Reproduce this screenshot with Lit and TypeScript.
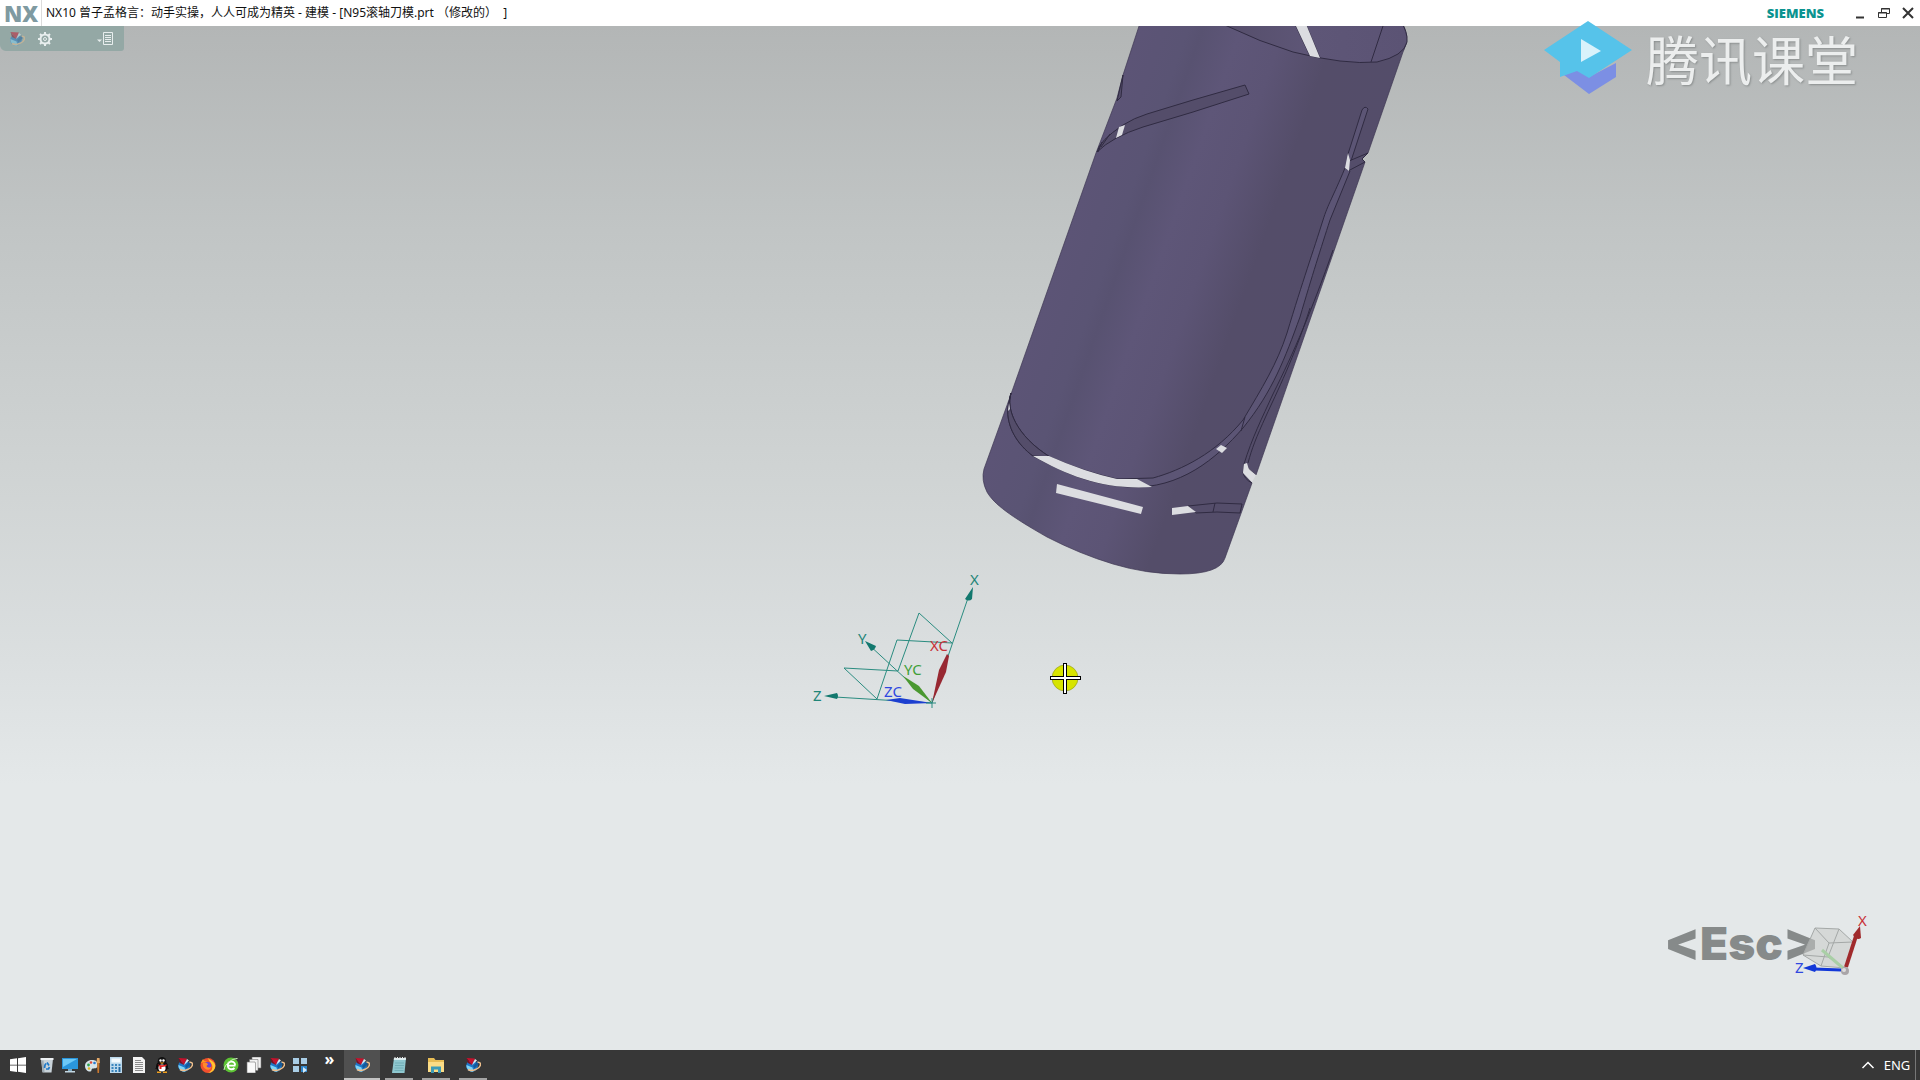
import { LitElement, html, svg, css } from "lit";
import { customElement } from "lit/decorators.js";

const nx = svg`
  <circle cx="7" cy="9" r="5.800" fill="#1e78c8"/>
  <path d="M1.500 8a5.800 5.800 0 0 0 7 6.500l-1-4z" fill="#7dd3f7"/>
  <path d="M8 9l5-5 .5 3.500-4 4z" fill="#155a9c"/>
  <path d="M1.500 1l8.500.5-3 6.500z" fill="#c4122c"/>
  <path d="M1.500 1l5.500 7-4-2z" fill="#7d0f22"/>
  <path d="M7 8l3-6 2 1.500z" fill="#dcebf5"/>
  <path d="M3 12.500c4 2.500 12-1 12.500-5 .1-2-1.500-2.500-3-2.300" fill="none" stroke="#eebf8c" stroke-width="1.500"/>`;

const art = {
  start: svg`<path d="M0 2.300l7-1v6.400H0zM8 1.200l8-1.200v7.700H8zM0 8.600h7V15l-7-1zM8 8.600h8V16l-8-1.200z" fill="#fff"/>`,
  bin: svg`<path d="M2 2h12l-1.500 13.500h-9z" fill="#c9d3d9"/><path d="M1.500 1h13v2h-13z" fill="#eef2f4"/><path d="M2.500 3.500h2l1 11.500h-2z" fill="#9dabb4"/><path d="M8 5.500l2 3M10.500 10l-1 2H7M5.500 11l.5-3 1-1.500" fill="none" stroke="#1c78c8" stroke-width="1.700"/>`,
  monitor: svg`<path d="M0 1h16v11H0z" fill="#2a96dc"/><path d="M1 2h14L1 10z" fill="#6cc8f6"/><path d="M6 12h4v2H6z" fill="#7ba7c0"/><path d="M3 14h10v1.500H3z" fill="#c2d7e2"/>`,
  paint: svg`<path d="M7 3c-4 0-7 2.500-7 6s3 6 5.500 5.500c1.500-.5.5-2.500 2-3s5 1 5-3.500S10 3 7 3z" fill="#d7e4ea"/><circle cx="3.500" cy="8" r="1.400" fill="#2ea44f"/><circle cx="6" cy="5.500" r="1.300" fill="#e04a3a"/><circle cx="9.500" cy="6" r="1.300" fill="#2a7ad0"/><circle cx="4" cy="11.500" r="1.300" fill="#e6b422"/><path d="M12 6h2.500L14 16h-1.500z" fill="#c87830"/><path d="M11.500 6L12 1h2.500l.5 5z" fill="#e3a868"/>`,
  calc: svg`<path d="M2 0h12v16H2z" fill="#bcd9ec"/><path d="M3.500 1.500h9v4h-9z" fill="#f4fafd"/><path d="M3.500 7h2v2h-2zM7 7h2v2H7zM3.500 10h2v2h-2zM7 10h2v2H7zM3.500 13h2v2h-2zM7 13h2v2H7zM10.500 7h2v2h-2z" fill="#3b86bd"/><path d="M10.500 10h2v5h-2z" fill="#2468a0"/>`,
  doc: svg`<path d="M2 0h9l3 3v13H2z" fill="#f3f3f3"/><path d="M4 3.500h6M4 5.500h8M4 7.500h8M4 9.500h8M4 11.500h8M4 13.500h8" stroke="#8b8b8b"/>`,
  qq: svg`<ellipse cx="8" cy="9.500" rx="6" ry="5.500" fill="#0c0c0c"/><ellipse cx="8" cy="4.500" rx="4.300" ry="4.500" fill="#111"/><path d="M1 12l3-4 1 3zM15 12l-3-4-1 3z" fill="#0c0c0c"/><ellipse cx="8" cy="11" rx="3.600" ry="3.500" fill="#fff"/><circle cx="6.500" cy="3.500" r="1.200" fill="#fff"/><circle cx="9.500" cy="3.500" r="1.200" fill="#fff"/><path d="M5.500 5.500h5L8 7z" fill="#f5a623"/><path d="M3.500 7.200c3 1.500 6 1.500 9 0v1.600c-2 1-3.500 1.200-5 1.100v2H5.500V9.500z" fill="#e02020"/><path d="M3 14.500h4V16H3zM9 14.500h4V16H9z" fill="#f0a020"/>`,
  nx,
  firefox: svg`<circle cx="8" cy="8.500" r="7.500" fill="#f2502e"/><path d="M8.500 1C9 3 15 4 15.300 9c-.3 4-3.300 7-7.300 7 4-2 5-5 4-8S8 4 8.500 1z" fill="#ffc630"/><path d="M.8 6L3 2l1.500 2 3 .5z" fill="#ff9a20"/><circle cx="7.800" cy="8.300" r="3.400" fill="#6d45d2"/><path d="M3 6c2-1 4 0 5 1.200L6.500 9c1 2 4 2 5 .5-.5 3-3.500 4-6 2.500S2.500 8 3 6z" fill="#ff8a2a"/>`,
  green: svg`<circle cx="8" cy="8" r="7.500" fill="#5cc234"/><path d="M12.500 8.700H4.800c.2 3.800 4.500 4.500 6.700 2.300M4.800 8.300c.2-5 7.100-5 7.300 0" fill="none" stroke="#fff" stroke-width="1.800"/><path d="M1 13C1.500 7 9 1.500 14.500 1.500" fill="none" stroke="#d4f5c4"/>`,
  pages: svg`<path d="M6 0h9v11H6z" fill="#f2f2f2" stroke="#777" stroke-width=".6"/><path d="M3.500 2.500h8.500v11H3.500z" fill="#f2f2f2" stroke="#777" stroke-width=".6"/><path d="M1 5h8l.5 1v10H1z" fill="#fafafa" stroke="#777" stroke-width=".6"/>`,
  grid: svg`<path d="M1 1h6v6H1zM9 1h6v6H9zM1 9h6v6H1z" fill="#a9cde6"/><path d="M9 9h6v6H9z" fill="#2f86cc"/><path d="M11 10l4 3-4 3z" fill="#d4eafa"/>`,
  notepad: svg`<path d="M3 1h12l-1.500 15H1z" fill="#8fc7cf"/><path d="M3 1h12l-.2 2H2.800z" fill="#dceff1"/><path d="M4 6h9M4 8.500h9M3.500 11h9M3.500 13.500h9" stroke="#6aa9b3" stroke-width=".8"/><path d="M4 0v2M6.500 0v2M9 0v2M11.500 0v2M14 0v2" stroke="#e9e9e9"/>`,
  folder: svg`<path d="M0 1h6l1.500 2H16v12H0z" fill="#e8bd55"/><path d="M0 5h16v10H0z" fill="#fbdc86"/><path d="M3 9.500h10V16h-3v-3.500H6V16H3z" fill="#3c9bb8"/>`,
};

type IconName = keyof typeof art;
const icon = (name: IconName) =>
  html`<svg class="icon" viewBox="0 0 16 16" aria-hidden="true">${art[name]}</svg>`;

const pinned: [IconName, string][] = [
  ["bin", "回收站"], ["monitor", "此电脑"], ["paint", "画图"], ["calc", "计算器"],
  ["doc", "文档"], ["qq", "QQ"], ["nx", "NX"], ["firefox", "Firefox"],
  ["green", "浏览器"], ["pages", "文件"], ["nx", "NX 10"], ["grid", "应用"],
];
const running: [IconName, string][] = [
  ["notepad", "记事本"], ["folder", "文件资源管理器"], ["nx", "NX"],
];

@customElement("title-bar")
export class TitleBar extends LitElement {
  static styles = css`
    :host { display: flex; align-items: center; height: 26px; background: #fff; color: #111;
      font: 12px/26px "Noto Sans", "Noto Sans CJK SC", sans-serif; }
    .logo { width: 41px; padding-left: 4px; box-sizing: border-box; color: #7f9aa1;
      font: 800 22px/26px "Open Sans", sans-serif; }
    .title { flex: 1; margin: 0; padding-left: 4px; border-left: 1px solid #dcdcdc;
      font-size: 12px; font-weight: 400; white-space: pre; }
    .brand { margin-right: 24px; color: #0b9490; font: 800 13px/26px "Open Sans", sans-serif; }
    button { display: grid; place-items: center; width: 24px; height: 26px; padding: 0; border: 0; background: none; }
    svg { width: 14px; height: 14px; fill: none; stroke: #333; }
  `;
  render() {
    return html`
      <span class="logo">NX</span>
      <h1 class="title">NX10 曾子孟格言：动手实操，人人可成为精英 - 建模 - [N95滚轴刀模.prt （修改的）  ]</h1>
      <span class="brand">SIEMENS</span>
      <button aria-label="最小化"><svg viewBox="0 0 14 14"><path d="M3 11.500h8" stroke-width="2"/></svg></button>
      <button aria-label="还原"><svg viewBox="0 0 14 14"><path d="M4.500 6V2.500h8v5H10M4 3h9M1.500 6.500h8v5h-8zM1 7h9"/></svg></button>
      <button aria-label="关闭"><svg viewBox="0 0 14 14"><path d="M2 2l10 10M12 2L2 12" stroke-width="2"/></svg></button>`;
  }
}

@customElement("model-view")
export class ModelView extends LitElement {
  static styles = css`
    :host { display: block; position: relative; overflow: hidden;
      background: linear-gradient(#b3b6b6, #c1c5c5 20%, #cfd3d3 43%, #dbdfe0 62%, #e4e8e9 74%, #e4e8e9); }
    .scene { position: absolute; inset: 0; width: 100%; height: 100%; }
    .tools { position: relative; display: flex; align-items: center; width: 124px; height: 25px;
      box-sizing: border-box; padding: 0 11px 0 9px; gap: 12px; background: #94a8a5; border-radius: 0 0 3px 6px; }
    .tools button { display: grid; padding: 0; border: 0; background: none; }
    .tools button:last-child { margin-left: auto; }
    .tools svg { width: 16px; height: 16px; }
    .faded { opacity: .5; }
    .edge { fill: none; stroke: #302b42; stroke-width: 1; }
    .groove { fill: #544d6a; stroke: #302b42; stroke-width: 1; }
    .ridge { fill: #5c5575; stroke: #302b42; stroke-width: 1; }
    .hole { fill: #dcdde1; }
    .datum { fill: none; stroke: #2a8c80; stroke-width: 1; }
    .tip { fill: #12786e; }
    .label { font: 15px "Noto Sans", sans-serif; }
    .teal { fill: #1f8578; }
    .red { fill: #c83038; }
    .green { fill: #3f9f38; }
    .blue { fill: #3048e0; }
    .key { fill: #868a8a; font: 900 46px Inter, "Liberation Sans", sans-serif; }
    .key.wide { font-size: 52px; }
  `;
  render() {
    return html`
      <svg class="scene" viewBox="0 26 1920 1024" preserveAspectRatio="xMidYMid slice" role="img" aria-label="N95滚轴刀模">
        <defs>
          <linearGradient id="skin" gradientUnits="userSpaceOnUse" x1="1040" y1="310" x2="1300" y2="401">
            <stop offset="0" stop-color="#5c5476"/><stop offset=".17" stop-color="#5a5474"/>
            <stop offset=".22" stop-color="#585271"/><stop offset=".35" stop-color="#5e5678"/>
            <stop offset=".5" stop-color="#5c5475"/><stop offset=".68" stop-color="#544d69"/>
            <stop offset="1" stop-color="#544d6a"/>
          </linearGradient>
          <linearGradient id="bore" x1="0" x2="1"><stop offset="0" stop-color="#544d69"/><stop offset=".5" stop-color="#5e5677"/><stop offset="1" stop-color="#5b5374"/></linearGradient>
        </defs>

        <path fill="url(#skin)" stroke="#3d3752" stroke-width=".7" d="M1141 20L1123 75 1117 98 1096 153 1010 397 984 469Q981 480 987 492C994 504 1010 516 1047 537Q1080 554 1113 564T1180 574Q1220 574 1225 558L1252 483 1243 473 1244 464 1256 475 1365 162 1362 159 1368 153 1403 52Q1412 36 1400 20z"/>
        <path fill="url(#bore)" stroke="#302b42" d="M1214 20L1227 26Q1260 42 1293 52 1345 65 1377 62 1404 56 1407 42 1408 32 1400 20z"/>
        <path class="edge" d="M1385 20L1371 62M1294 22L1310 56M1305 22L1320 58"/>
        <path class="hole" d="M1295 24H1306L1320 58 1310 56z"/>
        <path class="groove" d="M1123 75L1117 101 1121 97z"/>
        <path class="groove" d="M1245 85L1249 94 1193 112 1143 127Q1112 137 1097 152 1099 141 1123 125 1134 118 1147 114L1193 100z"/>
        <path class="edge" d="M1102 142L1098 152M1110 134L1101 147"/>
        <path class="hole" d="M1119 127L1125 125 1122 135 1116 138z"/>

        <path class="ridge" d="M1348 154L1362 110Q1365 105 1368 109L1350 164z"/>
        <path class="groove" d="M1349 161L1368 153 1362 159 1365 162 1348 171z"/>
        <path class="ridge" d="M1345 168C1333 197 1328 204 1323 220 1313 252 1303 280 1287 333 1277 364 1262 388 1243 420 1216 453 1182 470 1153 478L1117 479Q1085 472 1050 457C1015 435 1006 408 1011 393L1008 407C1006 427 1018 445 1033 456 1063 472 1090 485 1130 487 1180 489 1216 459 1243 428 1273 391 1285 358 1300 317 1312 276 1321 248 1330 220L1350 171z"/>
        <path class="groove" d="M1050 457C1015 435 1006 408 1011 393L1008 407C1006 427 1018 445 1033 456z"/>
        <path class="edge" d="M1245 417L1241 431"/>
        <path class="hole" d="M1348 153L1350 160 1349 171 1345 168z"/>
        <path class="hole" d="M1033 456L1049 456Q1085 472 1117 479L1137 479 1152 487C1105 490 1070 477 1033 456z"/>
        <path class="hole" d="M1009 403l1 6-2 2z"/>
        <path class="hole" d="M1221 445L1227 448 1222 453 1216 449z"/>
        <path class="hole" d="M1057 484L1143 507 1141 514 1056 493z"/>
        <path class="groove" d="M1188 506L1217 503 1242 504 1240 513 1217 512 1196 513z"/>
        <path class="edge" d="M1215 503L1213 512"/>
        <path class="hole" d="M1172 508L1188 506 1196 512 1172 515z"/>
        <path class="edge" d="M1333 250C1312 310 1294 352 1273 394 1262 418 1252 438 1244 464M1310 308C1295 356 1276 394 1266 416 1256 438 1252 448 1248 463"/>
        <path class="edge" d="M1243 472Q1244 479 1252 483"/>
        <path class="hole" d="M1244 464L1247 463 1249 470 1256 475 1252 482 1243 473z"/>

        <path class="datum" d="M932 703L968 598M932 703L868 644M932 703L835 697M898 671L919 613 952 643 897 640 877 699 844 668 898 671"/>
        <path class="tip" d="M973 587L972 599Q969 602 965 599zM865 641L876 646Q875 650 871 651zM824 696L837 693Q839 696 837 699z"/>
        <path fill="#982832" d="M932 703L939 670 947 654 949 656 946 672z"/>
        <path fill="#4a9830" d="M932 703L913 689 903 676 908 679 919 686z"/>
        <path fill="#1c3fd0" d="M932 703L905 704 886 700 900 698z"/>
        <path class="datum" d="M926 703h10M932 698v10"/>
        <text class="label teal" x="970" y="585">X</text>
        <text class="label teal" x="858" y="644">Y</text>
        <text class="label teal" x="813" y="701">Z</text>
        <text class="label red" x="930" y="651">XC</text>
        <text class="label green" x="904" y="675">YC</text>
        <text class="label blue" x="884" y="697">ZC</text>

        <circle cx="1065" cy="678" r="13" fill="#d7e400" stroke="#8c9420" stroke-width=".6"/>
        <path d="M1065 663v31M1050 678h31" stroke="#000" stroke-width="4"/>
        <path d="M1065 664v29M1051 678h29" stroke="#fff" stroke-width="2"/>

        <text class="key" x="1664" y="960"><tspan class="key wide">&lt;</tspan>Esc<tspan class="key wide">&gt;</tspan></text>
        <path d="M1815 928L1839 929 1853 942 1845 968 1821 966 1803 955z" fill="#c8cac9" fill-opacity=".55" stroke="#a4a8a7"/>
        <path d="M1815 928L1829 943 1853 942M1829 943L1821 966M1803 955L1828 957 1839 929M1828 957L1845 968" fill="none" stroke="#a4a8a7"/>
        <path d="M1822 950L1844 969" stroke="#a9cfa6" stroke-width="3"/>
        <path d="M1846 967L1856 936" stroke="#a02a2c" stroke-width="4"/>
        <path d="M1860 926L1861 938Q1857 941 1853 935z" fill="#a02a2c"/>
        <path d="M1841 970L1814 969" stroke="#1238d8" stroke-width="3"/>
        <path d="M1803 968L1815 964Q1818 968 1815 972z" fill="#1238d8"/>
        <circle cx="1845" cy="971" r="4" fill="#a9a5a8"/><circle cx="1844" cy="970" r="2" fill="#ddd"/>
        <text class="label red" x="1858" y="926">X</text>
        <text class="label blue" x="1795" y="973">Z</text>
      </svg>
      <div class="tools">
        <button aria-label="NX"><svg class="faded" viewBox="0 0 16 16">${nx}</svg></button>
        <button aria-label="设置"><svg viewBox="0 0 16 16" fill="none" stroke="#e8eeee"><circle cx="8" cy="8" r="4.500" stroke-width="2"/><circle cx="8" cy="8" r="1.500"/><path d="M8 1v2M8 13v2M1 8h2M13 8h2M3 3l1.500 1.500M11.500 11.500L13 13M13 3l-1.500 1.500M4.500 11.500L3 13" stroke-width="2"/></svg></button>
        <button aria-label="菜单"><svg viewBox="0 0 16 16" fill="none" stroke="#e8eeee"><path d="M6.500 1.500h9v12h-9zM8 4.500h6M8 6.500h6M8 8.500h6M8 10.500h6"/><path d="M0 8.500h5L2.500 11z" fill="#e8eeee" stroke="none"/></svg></button>
      </div>`;
  }
}

@customElement("task-bar")
export class TaskBar extends LitElement {
  static styles = css`
    :host { display: flex; height: 30px; background: #373737; color: #fff;
      font: 13px/30px "Noto Sans", sans-serif; }
    button { display: grid; place-items: center; width: 23px; height: 30px; padding: 0; border: 0;
      background: none; color: inherit; font: inherit; }
    .icon { width: 16px; height: 16px; }
    .start { width: 35px; }
    .more { width: 33px; padding: 0 0 12px 4px; font: bold 16px/16px "Noto Sans", sans-serif; }
    .running { display: flex; gap: 9px; margin-left: 5px; }
    .running button, .active { box-sizing: border-box; width: 28px; padding-top: 2px; border-bottom: 2px solid #a4a4a4; }
    .active { width: 36px; background: #505050; border-color: #c4c4c4; }
    .tray { display: flex; align-items: center; margin-left: auto; padding-right: 4px; }
    .lang { width: 36px; }
    .line { width: 1px; height: 30px; background: #777; }
  `;
  render() {
    return html`
      <button class="start" aria-label="开始">${icon("start")}</button>
      ${pinned.map(([n, l]) => html`<button aria-label=${l}>${icon(n)}</button>`)}
      <button class="more">»</button>
      <button class="active" aria-label="NX 建模">${icon("nx")}</button>
      <div class="running">${running.map(([n, l]) => html`<button aria-label=${l}>${icon(n)}</button>`)}</div>
      <div class="tray">
        <button aria-label="显示隐藏的图标"><svg class="icon" viewBox="0 0 16 16" fill="none" stroke="#fff"><path d="M2.500 11L8 5.500l5.500 5.500" stroke-width="1.500"/></svg></button>
        <button class="lang">ENG</button>
        <span class="line"></span>
      </div>`;
  }
}

@customElement("app-root")
export class AppRoot extends LitElement {
  static styles = css`
    :host { display: flex; flex-direction: column; position: relative; min-height: 100vh; }
    model-view { flex: 1; }
    .mark { position: absolute; top: 20px; right: 62px; display: flex; align-items: center; gap: 14px;
      color: #eceeee; font: 400 53px/74px "Noto Sans CJK SC", sans-serif; text-shadow: 1px 1px 2px #8b8f8f; pointer-events: none; }
    .mark svg { width: 88px; height: 76px; }
  `;
  render() {
    return html`
      <title-bar></title-bar>
      <model-view></model-view>
      <task-bar></task-bar>
      <div class="mark">
        <svg viewBox="0 0 88 76" aria-hidden="true">
          <path d="M20 55L34 50 45 57 72 43V57L45 74z" fill="#7c8fe4"/>
          <path d="M44 1L88 30 45 58 33 51 16 57V42L0 30z" fill="#56c3ea"/>
          <path d="M37 19L57 31 37 42z" fill="#d9f2fb"/>
        </svg>
        <span>腾讯课堂</span>
      </div>`;
  }
}
